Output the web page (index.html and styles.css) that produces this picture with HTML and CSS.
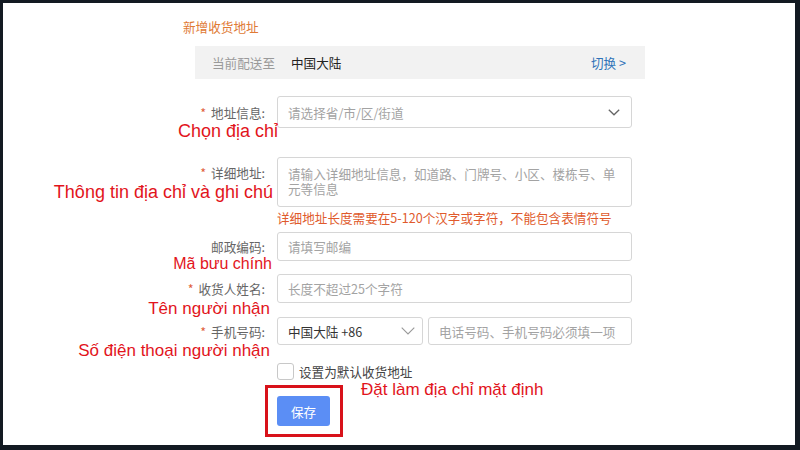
FILE: index.html
```html
<!DOCTYPE html>
<html lang="zh">
<head>
<meta charset="utf-8">
<link rel="stylesheet" href="styles.css">
</head>
<body>
<div class="frame">
  <div class="title">新增收货地址</div>
  <div class="bar">
    <span class="bar-label">当前配送至</span>
    <span class="bar-value">中国大陆</span>
    <span class="bar-switch">切换 &gt;</span>
  </div>

  <div class="row r1">
    <div class="label"><span class="star">*</span>地址信息:<span class="ann a1">Chọn địa chỉ</span></div>
    <div class="control select">
      <span class="ph">请选择省/市/区/街道</span>
      <svg class="chev" width="12" height="7" viewBox="0 0 12 7"><polyline points="0.8,0.8 6,5.8 11.2,0.8" fill="none" stroke="#666" stroke-width="1.3"/></svg>
    </div>
  </div>

  <div class="row r2">
    <div class="label top"><span class="star">*</span>详细地址:<span class="ann a2">Thông tin địa chỉ và ghi chú</span></div>
    <div class="control area"><span class="ph">请输入详细地址信息，如道路、门牌号、小区、楼栋号、单元等信息</span></div>
  </div>

  <div class="row err">
    <div class="label"></div>
    <div class="error">详细地址长度需要在5-120个汉字或字符，不能包含表情符号</div>
  </div>

  <div class="row r3">
    <div class="label">邮政编码:<span class="ann a3">Mã bưu chính</span></div>
    <div class="control"><span class="ph">请填写邮编</span></div>
  </div>

  <div class="row r4">
    <div class="label"><span class="star">*</span>收货人姓名:<span class="ann a4">Tên người nhận</span></div>
    <div class="control"><span class="ph">长度不超过25个字符</span></div>
  </div>

  <div class="row r5">
    <div class="label"><span class="star">*</span>手机号码:<span class="ann a5">Số điện thoại người nhận</span></div>
    <div class="phone">
      <div class="control code">
        <span class="val">中国大陆 +86</span>
        <svg class="chev2" width="14" height="8" viewBox="0 0 14 8"><polyline points="0.7,0.7 7,7 13.3,0.7" fill="none" stroke="#999" stroke-width="1.1"/></svg>
      </div>
      <div class="control tel"><span class="ph">电话号码、手机号码必须填一项</span></div>
    </div>
  </div>

  <div class="row check">
    <div class="label"></div>
    <div class="check-wrap"><span class="box"></span><span class="check-text">设置为默认收货地址</span></div>
  </div>

  <div class="save-row">
    <div class="highlight"><button class="save">保存</button></div>
    <span class="ann-inline">Đặt làm địa chỉ mặt định</span>
  </div>
</div>
</body>
</html>
```

FILE: styles.css
```css
html, body {
  margin: 0;
  padding: 0;
  background: #ffffff;
}

.frame {
  width: 800px;
  height: 450px;
  box-sizing: border-box;
  border-style: solid;
  border-color: #131a22;
  border-width: 3px 5px 5px 3px;
  background: #ffffff;
  font-family: "Noto Sans CJK SC", "Liberation Sans", sans-serif;
  font-size: 12.6px;
  color: #333333;
  padding-top: 14px;
  overflow: hidden;
}

.title {
  margin-left: 180px;
  line-height: 20px;
  color: #e07a35;
}

.bar {
  margin: 9px 0 0 192px;
  width: 450px;
  height: 33px;
  box-sizing: border-box;
  background: #f2f2f2;
  display: flex;
  align-items: center;
  padding: 0 19px 0 17px;
}

.bar-label {
  color: #9a9a9a;
}

.bar-value {
  margin-left: 16px;
  color: #222222;
}

.bar-switch {
  margin-left: auto;
  color: #2f72b8;
}

.row {
  display: flex;
  column-gap: 12px;
}

.label {
  width: 262px;
  flex: none;
  display: flex;
  align-items: center;
  justify-content: flex-end;
  color: #666666;
  position: relative;
  line-height: 15px;
}

.label.top {
  align-items: flex-start;
  padding-top: 8px;
  box-sizing: border-box;
}

.star {
  color: #e0603a;
  margin-right: 5px;
}

.control {
  width: 355px;
  box-sizing: border-box;
  border: 1px solid #d6d6d6;
  border-radius: 3px;
  background: #ffffff;
  display: flex;
  align-items: center;
  padding: 0 10px;
  line-height: 15px;
}

.ph {
  color: #a3a3a3;
}

.val {
  color: #333333;
}

.select {
  justify-content: space-between;
  padding-right: 11px;
}

.r1 { margin-top: 17px; height: 32px; }
.r2 { margin-top: 29px; height: 50px; }
.r3 { margin-top: 6px; height: 29px; }
.r4 { margin-top: 13px; height: 29px; }
.r5 { margin-top: 14px; height: 28px; }

.area {
  align-items: flex-start;
  padding: 8px 10px 0 10px;
}

.err {
  margin-top: 3px;
}

.error {
  line-height: 16px;
  color: #e05a2c;
  white-space: nowrap;
}

.phone {
  display: flex;
  column-gap: 5px;
}

.code {
  width: 146px;
  justify-content: space-between;
  padding-right: 7px;
}

.tel {
  width: 204px;
}

.check {
  margin-top: 18px;
  height: 17px;
}

.check-wrap {
  display: flex;
  align-items: center;
  column-gap: 5px;
}

.box {
  width: 17px;
  height: 17px;
  box-sizing: border-box;
  border: 1px solid #c8c8c8;
  border-radius: 3px;
  background: #ffffff;
}

.check-text {
  color: #444444;
  line-height: 15px;
}

.save-row {
  margin: 5px 0 0 262px;
  display: flex;
  align-items: flex-start;
  column-gap: 18px;
}

.highlight {
  border: 3px solid #d8121a;
  padding: 8px 10px 8px 9px;
  display: flex;
}

.save {
  width: 53px;
  height: 30px;
  border: none;
  border-radius: 3px;
  background: #5b8ef5;
  color: #ffffff;
  font-family: "Noto Sans CJK SC", "Liberation Sans", sans-serif;
  font-size: 12.6px;
  padding: 0;
}

.ann,
.ann-inline {
  font-family: "Liberation Sans", Arial, sans-serif;
  font-size: 17px;
  line-height: 20px;
  color: #e2141c;
  white-space: nowrap;
}

.ann {
  position: absolute;
}

.a1 { right: -13px; top: 25px; font-size: 18px; }
.a2 { right: -8px; top: 25px; font-size: 18px; }
.a3 { right: -7px; top: 22px; font-size: 16px; }
.a4 { right: -5px; top: 25px; }
.a5 { right: -5px; top: 24px; }

.ann-inline {
  margin-top: -5px;
}
```
